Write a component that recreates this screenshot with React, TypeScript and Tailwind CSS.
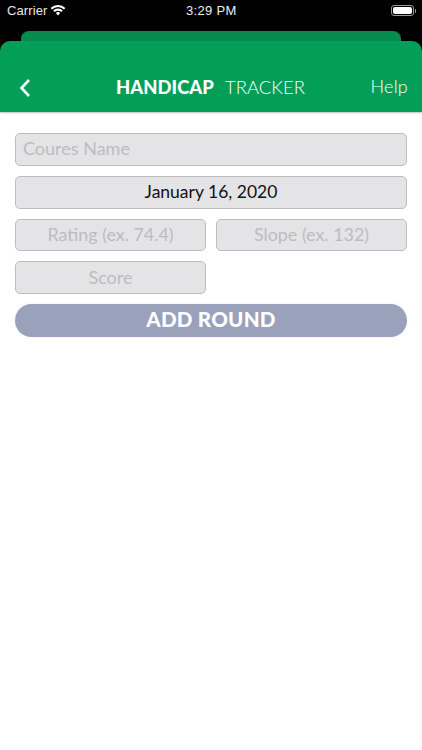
import React from "react";

const field = "h-[32.75px] bg-[#e4e4e6] border border-[#bdbdc0] rounded-[5px] flex items-center";
const placeholder = "text-[#bcbcbf] tracking-[0px]";

export default function App() {
  return (
    <div className="w-[422px] h-[750px] bg-white flex flex-col overflow-hidden font-['Lato',sans-serif]">
      <div className="bg-black h-[112px] flex flex-col">
        <div className="h-[31px] flex items-start justify-between pl-[7px] pr-[6px] pt-[3px] text-white relative">
          <div className="flex items-center gap-[3px] text-[13px] leading-[16px] font-['Liberation_Sans',sans-serif] tracking-[0.1px] text-[#e8e8e8]">
            <span>Carrier</span>
            <svg width="16" height="12" viewBox="0 0 16 12" className="-mt-[3px]">
              <path d="M0.6 4 A10.4 10.4 0 0 1 15.4 4 L13.9 5.6 A8.2 8.2 0 0 0 2.1 5.6 Z" fill="white" />
              <path d="M3.2 6.6 A6.7 6.7 0 0 1 12.8 6.6 L11.3 8.1 A4.6 4.6 0 0 0 4.7 8.1 Z" fill="white" />
              <path d="M5.8 9.1 A3.1 3.1 0 0 1 10.2 9.1 L8 11.4 Z" fill="white" />
            </svg>
          </div>
          <span className="absolute left-[186px] top-[3px] text-[13px] leading-[16px] font-['Liberation_Sans',sans-serif] font-medium tracking-[0.3px] text-[#eee]">3:29 PM</span>
          <div className="flex items-center mt-[2px]">
            <div className="w-[23px] h-[11px] rounded-[3px] border border-[#999] p-[1px]">
              <div className="w-full h-full bg-white rounded-[2px]" />
            </div>
            <div className="w-[1px] h-[4px] bg-[#999] ml-[1px] rounded-r" />
          </div>
        </div>
        <div className="mx-[21px] h-[10px] bg-[#078a50] rounded-t-[8px]" />
        <div className="flex-1 bg-[#039f58] rounded-t-[10px] shadow-[0_1px_2px_rgba(0,0,0,0.25)] flex items-center justify-between pl-[18px] pr-[14px] pt-[21px] text-white relative">
          <svg width="14" height="20" viewBox="0 0 14 20" className="mt-[1px]">
            <path d="M11 2 L3.5 10 L11 18" fill="none" stroke="#f4fbf7" strokeWidth="2.6" />
          </svg>
          <div className="absolute left-[116px] top-[33px] flex items-baseline gap-[11px] text-[18.4px] leading-[26px]">
            <span className="font-black tracking-[0.05px]">HANDICAP</span>
            <span className="font-light text-white tracking-[0.1px]">TRACKER</span>
          </div>
          <span className="text-[18px] font-light text-white leading-[24px] -mt-[3px] tracking-[0.2px]">Help</span>
        </div>
      </div>

      <div className="pl-[15px] pr-[15px] pt-[21px] flex flex-col gap-[10px]">
        <div className={`${field} ${placeholder} text-[18px] pl-[7px] pb-[1px]`}>Coures Name</div>
        <div className={`${field} justify-center text-[#111114] text-[17.5px] pb-[1px]`}>January 16, 2020</div>
        <div className="grid grid-cols-2 gap-[10px]">
          <div className={`${field} ${placeholder} justify-center text-[17.9px] pb-[1px]`}>Rating (ex. 74.4)</div>
          <div className={`${field} ${placeholder} justify-center text-[17.9px] pb-[1px]`}>Slope (ex. 132)</div>
        </div>
        <div className="grid grid-cols-2 gap-[10px]">
          <div className={`${field} ${placeholder} text-[18px] justify-center pb-[1px]`}>Score</div>
        </div>
        <div className="h-[32.75px] rounded-full bg-[#9aa2bb] flex items-center justify-center text-white font-black text-[20.6px] tracking-[0.2px] pb-[1px] shadow-[0_0_3px_rgba(0,0,0,0.08)]">ADD ROUND</div>
      </div>
    </div>
  );
}
